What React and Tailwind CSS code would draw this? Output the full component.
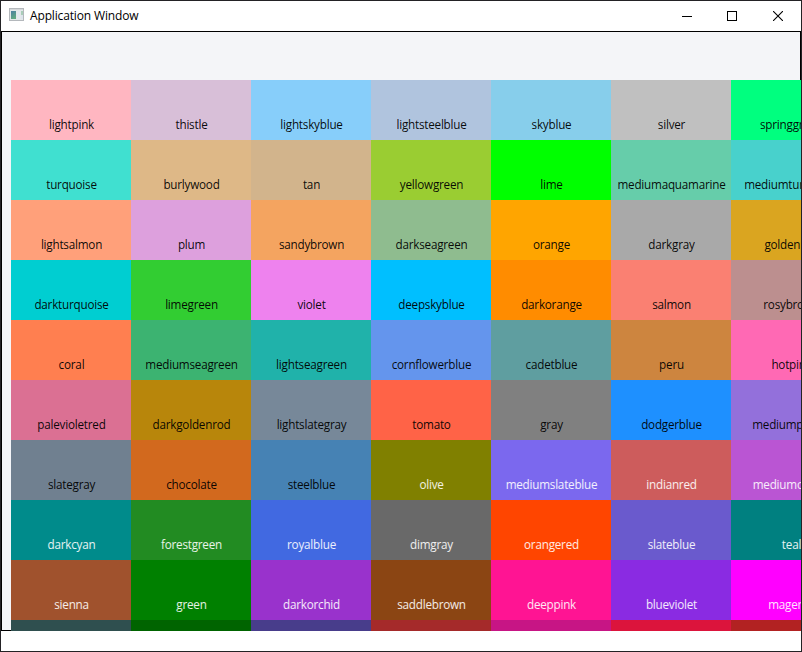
const ROWS = [
  ["lightpink", "thistle", "lightskyblue", "lightsteelblue", "skyblue", "silver", "springgreen"],
  ["turquoise", "burlywood", "tan", "yellowgreen", "lime", "mediumaquamarine", "mediumturquoise"],
  ["lightsalmon", "plum", "sandybrown", "darkseagreen", "orange", "darkgray", "goldenrod"],
  ["darkturquoise", "limegreen", "violet", "deepskyblue", "darkorange", "salmon", "rosybrown"],
  ["coral", "mediumseagreen", "lightseagreen", "cornflowerblue", "cadetblue", "peru", "hotpink"],
  ["palevioletred", "darkgoldenrod", "lightslategray", "tomato", "gray", "dodgerblue", "mediumpurple"],
  ["slategray", "chocolate", "steelblue", "olive", "mediumslateblue", "indianred", "mediumorchid"],
  ["darkcyan", "forestgreen", "royalblue", "dimgray", "orangered", "slateblue", "teal"],
  ["sienna", "green", "darkorchid", "saddlebrown", "deeppink", "blueviolet", "magenta"],
];

const CLIPPED_ROW = ["darkslategray", "darkgreen", "darkslateblue", "brown", "mediumvioletred", "crimson", "firebrick"];

// Swatches are ordered by brightness; labels turn white from "olive" onward.
const FIRST_WHITE = 6 * 7 + 3;

function Swatch({ name, white }) {
  return (
    <div
      className={`flex h-[60px] items-end justify-center pb-[7px] pl-px text-[11.7px] leading-[18px] tracking-[-0.22px] whitespace-nowrap ${white ? "text-white/90" : "text-black/95"}`}
      style={{ backgroundColor: name }}
    >
      <span>{name}</span>
    </div>
  );
}

function AppIcon() {
  return (
    <svg className="-mt-[3px]" width="15" height="13" viewBox="0 0 15 13" shapeRendering="crispEdges">
      <defs>
        <linearGradient id="pane" x1="0" y1="0" x2="0.4" y2="1">
          <stop offset="0" stopColor="#4b7fa3" />
          <stop offset="1" stopColor="#5fa882" />
        </linearGradient>
      </defs>
      <rect width="15" height="13" fill="#b4b8bc" />
      <rect x="1" y="1" width="13" height="1" fill="#d5d8da" />
      <rect x="1" y="2" width="13" height="10" fill="#e3e8ea" />
      <rect x="2" y="3" width="5" height="8" fill="url(#pane)" />
      <rect x="8" y="3" width="3" height="8" fill="#e3e8ef" />
      <rect x="12" y="3" width="2" height="4" fill="#a9cdb9" />
      <rect x="12" y="7" width="2" height="4" fill="#dde4ec" />
    </svg>
  );
}

export default function App() {
  return (
    <div className="flex h-[652px] w-[802px] flex-col overflow-hidden border border-[#232225] bg-white font-['Open_Sans','Noto_Sans',sans-serif]">
      <header className="flex h-[30px] shrink-0 items-center pl-2">
        <AppIcon />
        <h1 className="ml-1.5 text-xs leading-[18px] tracking-[-0.15px] text-black">Application Window</h1>
        <div className="ml-auto flex h-full text-black">
          <button aria-label="Minimize" className="flex w-[46px] items-center justify-center">
            <svg width="10" height="10" viewBox="0 0 10 10" shapeRendering="crispEdges">
              <path d="M0 5.5H10" stroke="currentColor" />
            </svg>
          </button>
          <button aria-label="Maximize" className="flex w-[45px] items-center pl-[17px]">
            <svg width="10" height="10" viewBox="0 0 10 10" shapeRendering="crispEdges">
              <path d="M.5.5h9v9h-9z" fill="none" stroke="currentColor" />
            </svg>
          </button>
          <button aria-label="Close" className="flex w-[46px] items-center justify-center">
            <svg width="10" height="10" viewBox="0 0 10 10">
              <path d="M0 0L10 10M10 0L0 10" stroke="currentColor" strokeWidth="1.1" />
            </svg>
          </button>
        </div>
      </header>
      <main className="h-[600px] shrink-0 border border-black bg-[#f4f5f8] pt-12 pl-[9px]">
        <div className="-mr-px h-[551px] overflow-hidden">
          <div className="grid w-[840px] grid-cols-7">
            {ROWS.flat().map((name, i) => (
              <Swatch key={name} name={name} white={i >= FIRST_WHITE} />
            ))}
            {CLIPPED_ROW.map((name) => (
              <div key={name} className="h-[11px]" style={{ backgroundColor: name }} />
            ))}
          </div>
        </div>
      </main>
    </div>
  );
}
